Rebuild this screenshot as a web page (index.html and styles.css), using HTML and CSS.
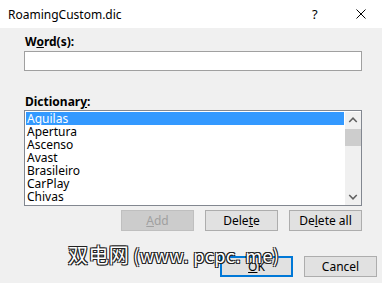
FILE: index.html
```html
<!DOCTYPE html>
<html lang="en">
<head>
    <meta charset="UTF-8">
    <title>RoamingCustom.dic</title>
    <link rel="stylesheet" href="styles.css">
</head>
<body>
    <div class="dialog">
        <header class="titlebar">
            <span class="title">RoamingCustom.dic</span>
            <span class="help">?</span>
            <svg class="close" width="10" height="10" viewBox="0 0 10 10">
                <path d="M0.5 0.5 L9.5 9.5 M9.5 0.5 L0.5 9.5" stroke="#000" stroke-width="1" fill="none"/>
            </svg>
        </header>

        <div class="body">
            <label class="label">W<u>o</u>rd(s):</label>
            <div class="input"></div>

            <label class="label dict-label">Dictionar<u>y</u>:</label>
            <div class="listbox">
                <ul class="items">
                    <li class="selected">Aguilas</li>
                    <li>Apertura</li>
                    <li>Ascenso</li>
                    <li>Avast</li>
                    <li>Brasileiro</li>
                    <li>CarPlay</li>
                    <li>Chivas</li>
                </ul>
                <div class="scrollbar">
                    <svg class="arrow" width="17" height="17" viewBox="0 0 17 17">
                        <path d="M4.5 10 L8.5 6 L12.5 10" stroke="#606060" stroke-width="1.6" fill="none"/>
                    </svg>
                    <div class="thumb"></div>
                    <div class="track"></div>
                    <svg class="arrow" width="17" height="17" viewBox="0 0 17 17">
                        <path d="M4.5 7 L8.5 11 L12.5 7" stroke="#606060" stroke-width="1.6" fill="none"/>
                    </svg>
                </div>
            </div>

            <div class="row">
                <button class="btn" disabled><u>A</u>dd</button>
                <button class="btn">Dele<u>t</u>e</button>
                <button class="btn">De<u>l</u>ete all</button>
            </div>

            <div class="row footer">
                <button class="btn default"><u>O</u>K</button>
                <button class="btn">Cancel</button>
            </div>

            <div class="watermark"><span class="wm-cjk">双电网</span>(www. pcpc. me)</div>
        </div>
    </div>
</body>
</html>
```

FILE: styles.css
```css
body {
    margin: 0;
    font-family: "Noto Sans", "Liberation Sans", sans-serif;
    font-size: 12px;
    color: #000;
    background-color: #f0f0f0;
}
.dialog {
    width: 382px;
    height: 283px;
    overflow: hidden;
    background-color: #f0f0f0;
}
.titlebar {
    height: 28px;
    background-color: #fff;
    display: flex;
    align-items: center;
    padding-left: 8px;
}
.title {
    flex: 1;
    font-size: 12px;
}
.help {
    width: 12px;
    margin-right: 32px;
    font-size: 13px;
}
.close {
    margin-right: 16px;
}
.body {
    position: relative;
    padding: 0 20px 0 24px;
}
.label {
    display: block;
    font-weight: bold;
    line-height: 16px;
    margin-top: 6px;
    padding-left: 1px;
}
.input {
    height: 18px;
    margin-top: 1px;
    background-color: #fff;
    border: 1px solid #a0a0a0;
}
.dict-label {
    margin-top: 23px;
}
.listbox {
    height: 94px;
    background-color: #fff;
    border: 1px solid #828790;
    display: flex;
}
.items {
    flex: 1;
    list-style: none;
    margin: 0;
    padding: 1px 1px 0 1px;
}
.items li {
    height: 13px;
    line-height: 13px;
    padding-left: 1px;
}
.items .selected {
    background-color: #3399ff;
    color: #fff;
}
.scrollbar {
    width: 16px;
    background-color: #f0f0f0;
    display: flex;
    flex-direction: column;
    margin-top: 1px;
}
.arrow {
    width: 16px;
    height: 17px;
}
.thumb {
    height: 17px;
    background-color: #cdcdcd;
}
.track {
    flex: 1;
}
.row {
    display: flex;
    justify-content: flex-end;
    gap: 11px;
    margin-top: 4px;
}
.btn {
    width: 73px;
    height: 21px;
    padding: 0;
    font-family: inherit;
    font-size: 12px;
    color: #000;
    background-color: #e1e1e1;
    border: 1px solid #adadad;
}
.btn:disabled {
    color: #a0a0a0;
    background-color: #cccccc;
    border-color: #bfbfbf;
}
.footer {
    margin-top: 25px;
    margin-right: -15px;
}
.default {
    border: 2px solid #0078d7;
}
.watermark {
    position: absolute;
    left: 68px;
    top: 211px;
    font-family: "Noto Sans CJK SC", sans-serif;
    font-size: 18px;
    line-height: 20px;
    letter-spacing: 0.4px;
    color: #fff;
    white-space: nowrap;
    text-shadow: 1px 1px 0 #222, -1px -1px 0 #222, 1px -1px 0 #222, -1px 1px 0 #222;
}
.wm-cjk {
    font-size: 20px;
    margin-right: 4px;
}
```
